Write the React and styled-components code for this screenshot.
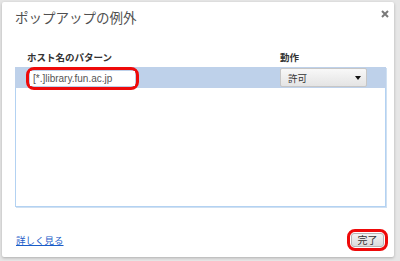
import styled, { createGlobalStyle } from "styled-components";

const GlobalStyle = createGlobalStyle`
  html, body {
    margin: 0;
    padding: 0;
    background: #e6e6e6;
    font-family: "Noto Sans CJK JP", "Noto Sans", sans-serif;
  }
`;

const Page = styled.div`
  width: 400px;
  height: 261px;
  padding: 2px 6px 4px 2px;
  box-sizing: border-box;
`;

const Dialog = styled.div`
  position: relative;
  height: 100%;
  background: #fff;
  box-shadow: 0 1px 3px rgba(0, 0, 0, 0.25);
  border-radius: 2px;
  padding: 6px 6px 0 13px;
  box-sizing: border-box;
  display: flex;
  flex-direction: column;
`;

const Title = styled.h1`
  margin: 0;
  font-size: 13.5px;
  font-weight: 400;
  color: #505050;
  line-height: 18px;
`;

const Close = styled.button`
  position: absolute;
  top: 8px;
  right: 5px;
  width: 8px;
  height: 8px;
  padding: 0;
  border: none;
  background: none;
  display: flex;
`;

const Headers = styled.div`
  display: flex;
  margin-top: 20px;
  height: 21px;
  align-items: center;
  font-size: 9.5px;
  font-weight: 700;
  color: #333;
`;

const HeadCell = styled.div`
  width: ${(p) => p.w}px;
  padding-left: ${(p) => p.pl || 0}px;
  box-sizing: border-box;
`;

const Table = styled.div`
  width: 371px;
  height: 140px;
  border: 1px solid #b3d2f2;
  border-top: none;
  box-shadow: 1px 1px 0 #cfe0f2;
  box-sizing: border-box;
`;

const Row = styled.div`
  height: 21px;
  background: #bed1ea;
  display: flex;
  align-items: center;
  margin: 0 -1px;
`;

const RedRing = styled.div`
  border: 3px solid #ee0a0a;
  border-radius: 8px;
  padding: 1px;
  margin: 1px 0 0 11px;
  width: 105px;
  display: flex;
`;

const Input = styled.input`
  width: 100%;
  height: 15px;
  border: none;
  padding: 0 0 0 3px;
  font-family: "Liberation Sans", "Noto Sans CJK JP", sans-serif;
  font-size: 10px;
  color: #555;
  background: #fff;
  outline: none;
`;

const Select = styled.div`
  margin-left: 141px;
  width: 87px;
  height: 19px;
  box-sizing: border-box;
  border: 1px solid #c6c6c6;
  border-radius: 2px;
  background: linear-gradient(#f8f8f8, #e4e4e4);
  display: flex;
  align-items: center;
  justify-content: space-between;
  padding: 0 5px 0 7px;
  font-size: 9.5px;
  color: #333;
`;

const Arrow = styled.span`
  width: 0;
  height: 0;
  border-left: 3.5px solid transparent;
  border-right: 3.5px solid transparent;
  border-top: 4px solid #111;
`;

const Footer = styled.div`
  margin-top: 22px;
  display: flex;
  align-items: center;
  justify-content: space-between;
  width: 373px;
`;

const Link = styled.a`
  font-size: 9.5px;
  color: #1a5cc8;
  text-decoration: underline;
  margin-left: 1px;
`;

const ButtonRing = styled.div`
  border: 3px solid #ee0a0a;
  border-radius: 8px;
  padding: 1px;
  display: flex;
`;

const Button = styled.button`
  width: 33px;
  height: 14px;
  padding: 0;
  border: 1px solid #b5b5b5;
  border-radius: 3px;
  background: linear-gradient(#f3f3f3, #dcdcdc);
  font-family: "Noto Sans CJK JP", sans-serif;
  font-size: 10px;
  color: #333;
  line-height: 12px;
`;

export default function App() {
  return (
    <>
      <GlobalStyle />
      <Page>
        <Dialog>
          <Title>ポップアップの例外</Title>
          <Close>
            <svg width="8" height="8" viewBox="0 0 8 8">
              <path d="M1 1L7 7M7 1L1 7" stroke="#7a7a7a" strokeWidth="2" />
            </svg>
          </Close>
          <Headers>
            <HeadCell w={265} pl={12}>ホスト名のパターン</HeadCell>
            <HeadCell w={100}>動作</HeadCell>
          </Headers>
          <Table>
            <Row>
              <RedRing>
                <Input defaultValue="[*.]library.fun.ac.jp" />
              </RedRing>
              <Select>
                許可
                <Arrow />
              </Select>
            </Row>
          </Table>
          <Footer>
            <Link href="#">詳しく見る</Link>
            <ButtonRing>
              <Button>完了</Button>
            </ButtonRing>
          </Footer>
        </Dialog>
      </Page>
    </>
  );
}
